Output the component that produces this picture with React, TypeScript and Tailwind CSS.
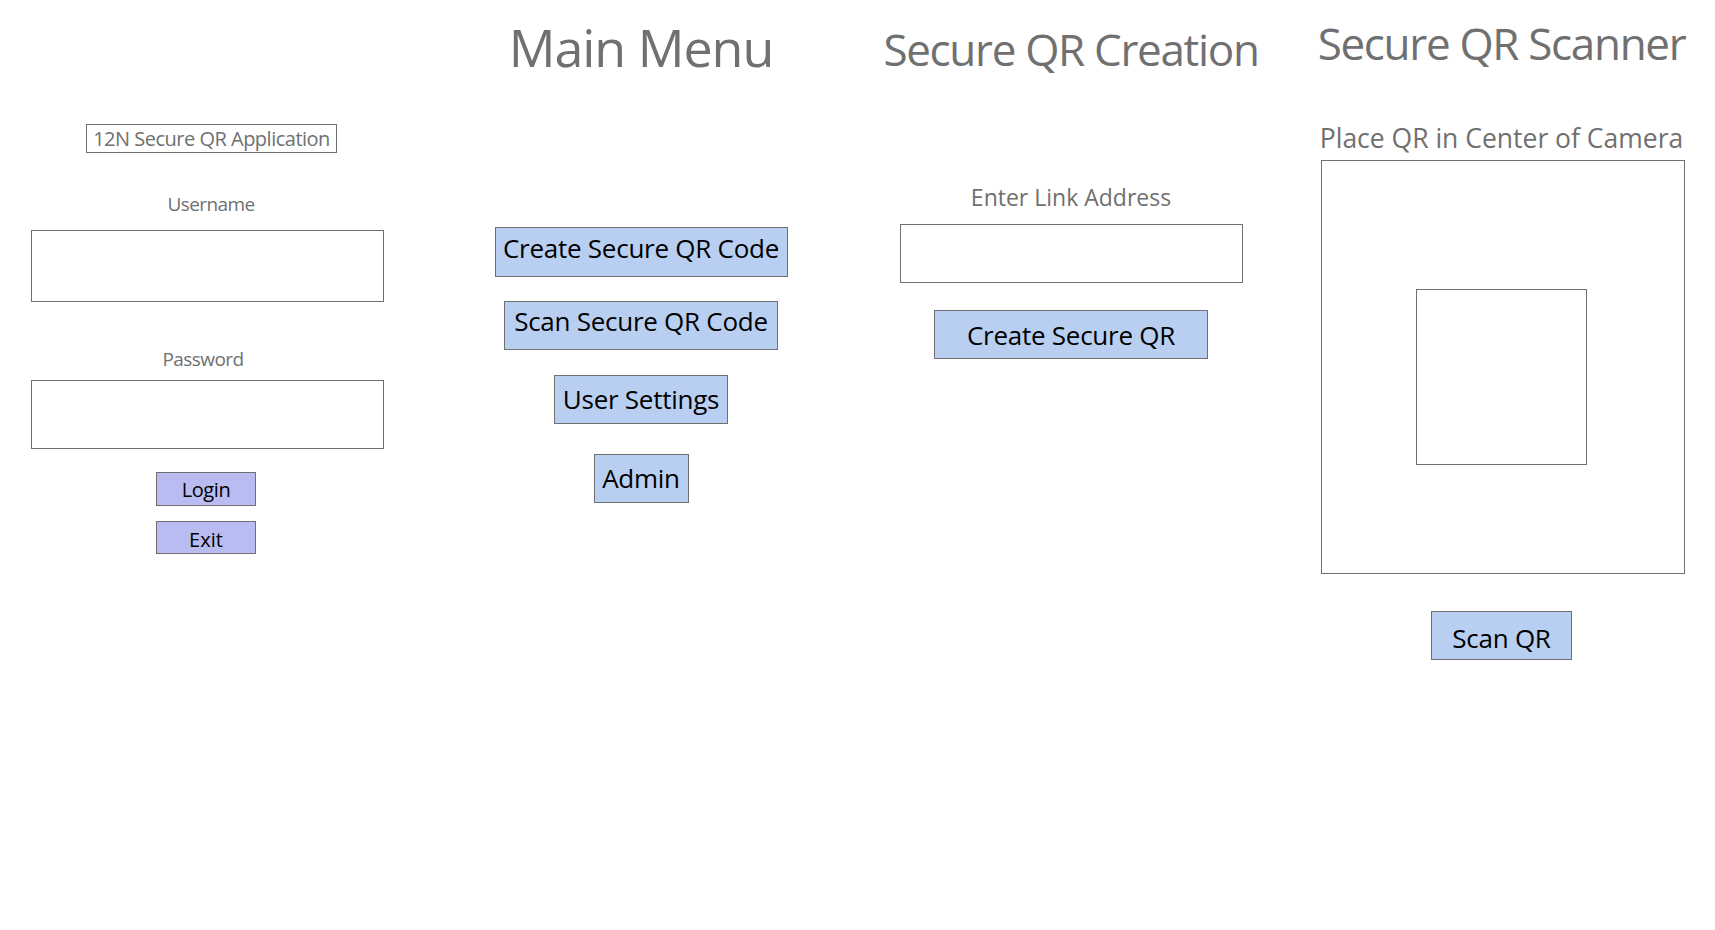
import React from 'react';

const font = "font-['Open_Sans',sans-serif]";

function FormButton({ label, className }: { label: string; className: string }) {
  return (
    <button
      className={`flex items-center justify-center border border-[#707070] bg-[#b9cff1] text-black text-[26px] leading-none tracking-[-0.01em] whitespace-nowrap ${className}`}
    >
      {label}
    </button>
  );
}

export default function App() {
  return (
    <div className={`h-screen w-full bg-white flex text-[#707070] ${font}`}>

      {/* Login */}
      <div className="w-[414px] flex flex-col items-center pt-[124px]">
        <div className="ml-[9px] h-[29px] w-[251px] border border-[#707070] flex items-center justify-center text-[20px] leading-none tracking-[-0.025em] whitespace-nowrap">
          12N Secure QR Application
        </div>

        <div className="ml-[8px] mt-[38px] text-[19px] leading-[26px] tracking-[-0.03em]">Username</div>
        <div className="mt-[13px] h-[72px] w-[353px] border border-[#707070]" />

        <div className="mr-[8px] mt-[44px] text-[19px] leading-[26px] tracking-[-0.03em]">Password</div>
        <div className="mt-[8px] h-[69px] w-[353px] border border-[#707070]" />

        <button className="mt-[23px] mr-[2px] h-[34px] w-[100px] border border-[#707070] bg-[#b8bcf0] text-black text-[20px] leading-none tracking-[-0.02em] pt-[2px]">
          Login
        </button>
        <button className="mt-[15px] mr-[2px] h-[33px] w-[100px] border border-[#707070] bg-[#b8bcf0] text-black text-[20px] leading-none pt-[4px]">
          Exit
        </button>
      </div>

      {/* Main menu */}
      <div className="w-[454px] flex flex-col items-center pt-[17px]">
        <h1 className="text-[52px] leading-[60px] tracking-[-0.02em]">Main Menu</h1>
        <FormButton label="Create Secure QR Code" className="mt-[150px] h-[50px] w-[293px] pb-[9px]" />
        <FormButton label="Scan Secure QR Code" className="mt-[24px] h-[49px] w-[274px] pb-[9px]" />
        <FormButton label="User Settings" className="mt-[25px] h-[49px] w-[174px] pb-[2px]" />
        <FormButton label="Admin" className="mt-[30px] h-[49px] w-[95px] pb-[2px]" />
      </div>

      {/* QR creation */}
      <div className="w-[406px] flex flex-col items-center pt-[21px]">
        <h1 className="text-[44px] leading-[56px] tracking-[-0.03em] whitespace-nowrap">Secure QR Creation</h1>
        <div className="mt-[105px] text-[23px] leading-[30px]">Enter Link Address</div>
        <div className="mt-[12px] h-[59px] w-[343px] border border-[#707070]" />
        <FormButton label="Create Secure QR" className="mt-[27px] h-[49px] w-[274px]" />
      </div>

      {/* QR scanner */}
      <div className="flex-1 pl-[47px] pt-[15px]">
        <div className="w-[364px] flex flex-col items-center">
          <h1 className="mr-[3px] text-[44px] leading-[56px] tracking-[-0.03em] whitespace-nowrap">Secure QR Scanner</h1>
          <div className="mt-[51px] mr-[3px] text-[26.5px] leading-[32px] whitespace-nowrap">Place QR in Center of Camera</div>
          <div className="mt-[6px] h-[414px] w-[364px] border border-[#707070] flex flex-col items-center pt-[128px]">
            <div className="mr-[3px] h-[176px] w-[171px] border border-[#707070]" />
          </div>
          <FormButton label="Scan QR" className="mt-[37px] mr-[3px] h-[49px] w-[141px] pt-[5px]" />
        </div>
      </div>

    </div>
  );
}
